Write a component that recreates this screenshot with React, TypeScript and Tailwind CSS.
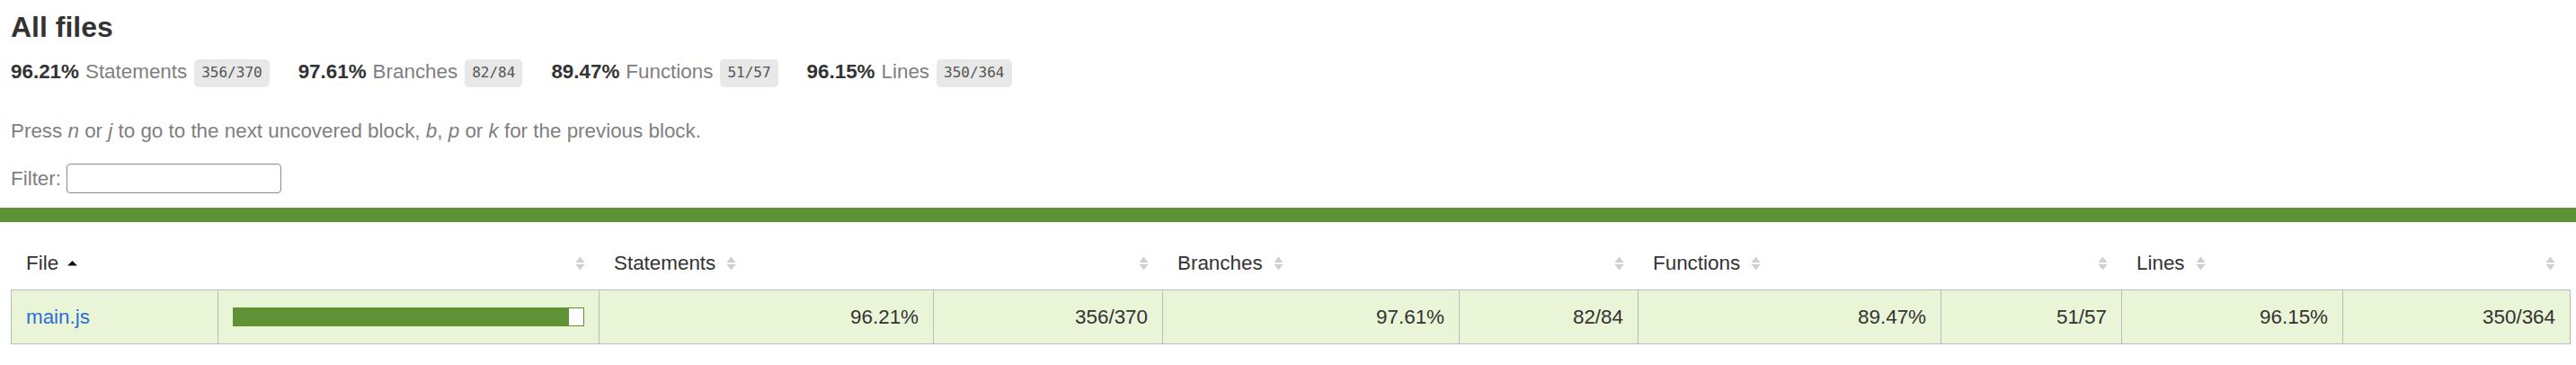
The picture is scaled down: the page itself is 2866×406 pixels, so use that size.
import React from 'react';

interface Stat {
  pct: string;
  label: string;
  frac: string;
}

const stats: Stat[] = [
  { pct: '96.21%', label: 'Statements', frac: '356/370' },
  { pct: '97.61%', label: 'Branches', frac: '82/84' },
  { pct: '89.47%', label: 'Functions', frac: '51/57' },
  { pct: '96.15%', label: 'Lines', frac: '350/364' },
];

// column widths of the summary table, measured from the report
const cols = 'grid grid-cols-[230px_424px_372px_255px_330px_199px_337px_201px_246px_252px]';

const Sorter = ({ active }: { active?: boolean }) => (
  <svg width="11" height="16" viewBox="0 0 11 16" className="shrink-0 block">
    {active ? (
      <path d="M0 10.5 L5.5 5 L11 10.5 Z" fill="#111" />
    ) : (
      <>
        <path d="M0.5 7 L5.5 0.5 L10.5 7 Z" fill="#cfcfcf" />
        <path d="M0.5 9 L10.5 9 L5.5 15.5 Z" fill="#cfcfcf" />
      </>
    )}
  </svg>
);

const HeadLabel = ({ label, active }: { label: string; active?: boolean }) => (
  <div className={`flex items-center px-[16px] ${active ? 'gap-[10px]' : 'gap-[12px]'}`}>
    <span>{label}</span>
    <Sorter active={active} />
  </div>
);

const HeadSort = () => (
  <div className="flex items-center justify-end px-[16px]">
    <Sorter />
  </div>
);

const Num = ({ value, last }: { value: string; last?: boolean }) => (
  <div className={`flex items-center justify-end px-[16px] ${last ? '' : 'border-r border-[#bbb]'}`}>
    {value}
  </div>
);

export default function App() {
  return (
    <div className="min-h-[406px] bg-white text-[#333] font-['Liberation_Sans',Arial,sans-serif] text-[22.4px]">
      <div className="pl-[12px] pr-[6px] pt-[14px]">
        <h1 className="text-[32px] leading-[32px] font-bold m-0">All files</h1>

        <div className="flex items-center h-[32px] mt-[18px] leading-[32px]">
          {stats.map(s => (
            <div key={s.label} className="flex items-center pr-[32px]">
              <span className="font-bold">{s.pct}</span>
              <span className="ml-[7px] text-[#7f7f7f]">{s.label}</span>
              <span className="ml-[8px] mt-[2px] h-[31px] flex items-center px-[8px] rounded-[5px] bg-[#e8e8e8] text-[#555] text-[16px] leading-none font-['DejaVu_Sans_Mono','Liberation_Mono',monospace]">
                {s.frac}
              </span>
            </div>
          ))}
        </div>

        <p className="mt-[37px] leading-[26px] text-[#7f7f7f]">
          Press <em>n</em> or <em>j</em> to go to the next uncovered block, <em>b</em>, <em>p</em> or <em>k</em> for
          the previous block.
        </p>

        <div className="flex items-center gap-[6px] h-[33px] mt-[23px] text-[#7f7f7f]">
          <span>Filter:</span>
          <input
            type="search"
            className="w-[239px] h-[33px] border border-[#8a8a8a] rounded-[4px] bg-white outline-none"
          />
        </div>
      </div>

      <div className="h-[16px] mt-[16px] bg-[#5f9234]" />

      <div className="pl-[12px] pr-[6px] pt-[16px]">
        <div className={`${cols} h-[59px] border-x border-transparent`}>
          <HeadLabel label="File" active />
          <HeadSort />
          <HeadLabel label="Statements" />
          <HeadSort />
          <HeadLabel label="Branches" />
          <HeadSort />
          <HeadLabel label="Functions" />
          <HeadSort />
          <HeadLabel label="Lines" />
          <HeadSort />
        </div>

        <div className={`${cols} h-[61px] border border-[#bbb] bg-[#e9f5d6]`}>
          <div className="flex items-center px-[16px] border-r border-[#bbb]">
            <a href="#" className="text-[#2a70d8] no-underline">main.js</a>
          </div>
          <div className="flex items-center px-[16px] border-r border-[#bbb]">
            <div className="flex w-full h-[21px] border border-[#5f9234] bg-white">
              <div className="h-full bg-[#5f9234]" style={{ width: '96%' }} />
            </div>
          </div>
          <Num value="96.21%" />
          <Num value="356/370" />
          <Num value="97.61%" />
          <Num value="82/84" />
          <Num value="89.47%" />
          <Num value="51/57" />
          <Num value="96.15%" />
          <Num value="350/364" last />
        </div>
      </div>
    </div>
  );
}
